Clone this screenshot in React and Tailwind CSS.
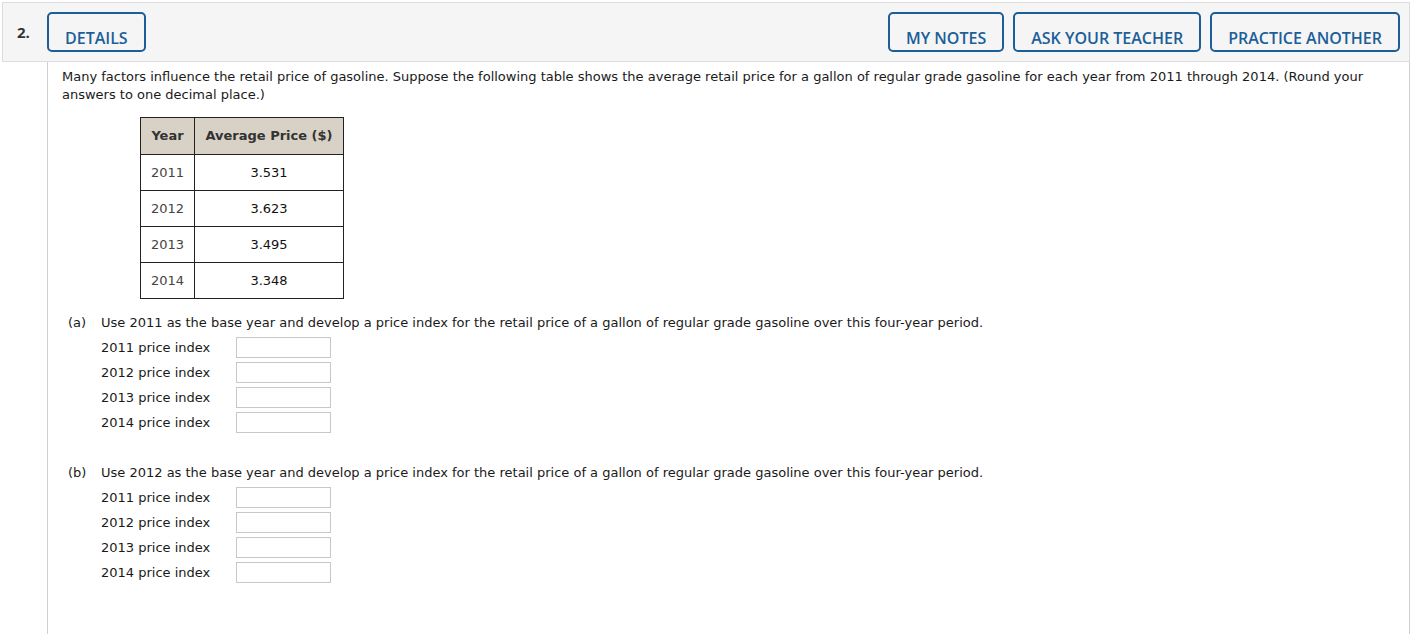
import React from 'react'

const BTN = "h-[40px] px-[16px] pt-[12px] rounded-[5px] border-2 border-[#1b5e98] bg-[#f5f5f5] text-[#1b5e98] text-[16px] font-semibold uppercase leading-[20px] whitespace-nowrap"

const rows = [
  ['2011', '3.531'],
  ['2012', '3.623'],
  ['2013', '3.495'],
  ['2014', '3.348'],
]

function IndexRow({ year }) {
  return (
    <div className="flex items-center h-[25px]">
      <span className="w-[135px]">{year} price index</span>
      <span className="block w-[95px] h-[21px] border border-[#c8c8c8] bg-white" />
    </div>
  )
}

function Part({ letter, base }) {
  return (
    <div>
      <div className="flex items-center h-[24px]">
        <span className="w-[39px] pl-[6px]">({letter})</span>
        <span>Use {base} as the base year and develop a price index for the retail price of a gallon of regular grade gasoline over this four-year period.</span>
      </div>
      <div className="pl-[39px]">
        {rows.map(r => <IndexRow key={r[0]} year={r[0]} />)}
      </div>
    </div>
  )
}

export default function App() {
  return (
    <div className="bg-white min-h-[634px] pt-[2px] pl-[2px] pr-[11px]" style={{ fontFamily: '"DejaVu Sans", Verdana, sans-serif' }}>
      {/* header bar */}
      <div className="flex items-start h-[60px] border border-[#dcdcdc] bg-[#f5f5f5] pl-[14px] pr-[9px] pt-[9px]" style={{ fontFamily: '"Open Sans", sans-serif' }}>
        <span className="w-[30px] text-[15px] font-bold text-[#333] leading-[20px] pt-[10px]">2.</span>
        <button className={BTN}>Details</button>
        <div className="flex-1" />
        <div className="flex gap-[9px]">
          <button className={BTN}>My Notes</button>
          <button className={BTN}>Ask Your Teacher</button>
          <button className={BTN}>Practice Another</button>
        </div>
      </div>

      {/* question body */}
      <div className="ml-[45px] border-x border-[#cfcfcf] min-h-[572px] pl-[14px] pr-[20px] pt-[6px] text-[13px] leading-[18px] text-[#1a1a1a]">
        <p>
          Many factors influence the retail price of gasoline. Suppose the following table shows the average retail price for a gallon of regular grade gasoline for each year from 2011 through 2014. (Round your answers to one decimal place.)
        </p>

        <table className="ml-[78px] mt-[13px] border-collapse">
          <thead>
            <tr className="bg-[#d8d2c6]">
              <th className="h-[37px] w-[54px] border border-[#222] font-bold text-[#333] text-center">Year</th>
              <th className="h-[37px] w-[149px] border border-[#222] font-bold text-[#333] text-center">Average Price ($)</th>
            </tr>
          </thead>
          <tbody>
            {rows.map(r => (
              <tr key={r[0]}>
                <td className="h-[36px] border border-[#222] text-[#444] text-center">{r[0]}</td>
                <td className="h-[36px] border border-[#222] text-[#111] text-center">{r[1]}</td>
              </tr>
            ))}
          </tbody>
        </table>

        <div className="mt-[12px]">
          <Part letter="a" base="2011" />
        </div>
        <div className="mt-[26px]">
          <Part letter="b" base="2012" />
        </div>
      </div>
    </div>
  )
}
